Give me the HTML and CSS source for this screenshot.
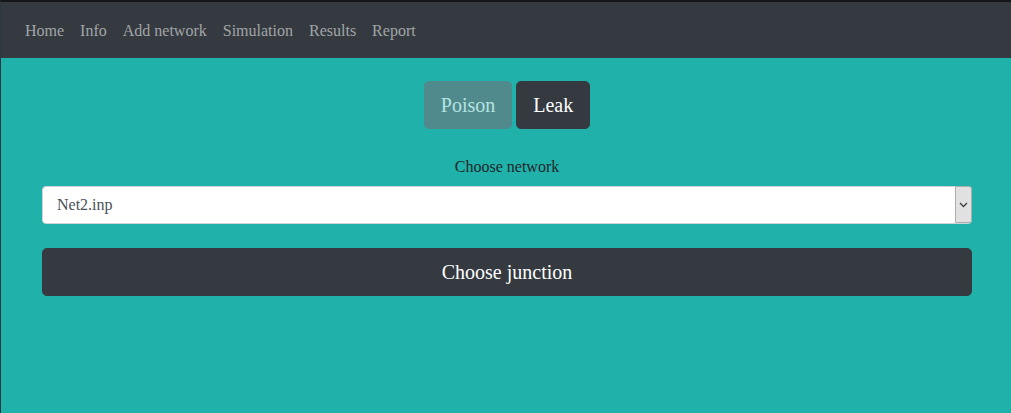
FILE: index.html
```html
<!DOCTYPE html>
<html lang="en">
<head>
<meta charset="utf-8">
<title>Simulation</title>
<link rel="stylesheet" href="styles.css">
</head>
<body>
<div class="page">
  <nav class="navbar">
    <a class="nav-link" href="#">Home</a>
    <a class="nav-link" href="#">Info</a>
    <a class="nav-link" href="#">Add network</a>
    <a class="nav-link" href="#">Simulation</a>
    <a class="nav-link" href="#">Results</a>
    <a class="nav-link" href="#">Report</a>
  </nav>
  <main class="main">
    <div class="toggle">
      <a class="btn btn-lg btn-secondary disabled" href="#">Poison</a>
      <a class="btn btn-lg btn-dark" href="#">Leak</a>
    </div>
    <label class="label" for="net">Choose network</label>
    <div class="select-wrap">
      <select id="net" class="select">
        <option>Net2.inp</option>
      </select>
      <span class="select-arrow">
        <svg width="9" height="6" viewBox="0 0 9 6"><path d="M1 1 L4.5 4.5 L8 1" fill="none" stroke="#3c3c3c" stroke-width="1.3"/></svg>
      </span>
    </div>
    <a class="btn btn-lg btn-dark btn-block" href="#">Choose junction</a>
  </main>
</div>
</body>
</html>
```
FILE: styles.css
```css
html, body {
  margin: 0;
  padding: 0;
  height: 100%;
}
body {
  font-family: "Liberation Serif", "Times New Roman", serif;
  font-size: 16px;
  line-height: 1.5;
  color: #212529;
  background: #20b2aa;
}
.page {
  min-height: 100%;
  box-sizing: border-box;
  border-top: 2px solid #141516;
  border-left: 1px solid #2b3845;
  background: #20b2aa;
}
.navbar {
  display: flex;
  align-items: center;
  height: 56px;
  padding: 1px 16px 0;
  box-sizing: border-box;
  background: #343a40;
}
.nav-link {
  color: rgba(255, 255, 255, 0.55);
  text-decoration: none;
  padding: 0 8px;
  font-size: 16px;
}
.main {
  display: flex;
  flex-direction: column;
  padding: 23px 39px 0 41px;
}
.toggle {
  display: flex;
  justify-content: center;
  gap: 4px;
}
.btn {
  display: block;
  box-sizing: border-box;
  text-align: center;
  text-decoration: none;
  border: 1px solid transparent;
  cursor: pointer;
}
.btn-lg {
  font-size: 20px;
  line-height: 1.5;
  padding: 8px 16px;
  border-radius: 4.8px;
}
.btn-secondary {
  background: #6c757d;
  border-color: #6c757d;
  color: #fff;
}
.btn-secondary.disabled {
  opacity: 0.65;
  cursor: default;
}
.btn-dark {
  background: #343a40;
  border-color: #343a40;
  color: #fff;
}
.label {
  align-self: center;
  margin-top: 26px;
  margin-bottom: 7px;
}
.select-wrap {
  position: relative;
  height: 38px;
}
.select {
  appearance: none;
  -webkit-appearance: none;
  width: 100%;
  height: 38px;
  box-sizing: border-box;
  font: inherit;
  font-family: "Liberation Serif", "Times New Roman", serif;
  font-size: 16px;
  color: #495057;
  background: #fff;
  border: 1px solid #ced4da;
  border-radius: 4px;
  padding: 0 12px 0 14px;
}
.select-arrow {
  position: absolute;
  top: 0;
  right: 0;
  width: 17px;
  height: 37px;
  box-sizing: border-box;
  background: #e1e1e1;
  border: 1px solid #adadad;
  border-radius: 0 3px 3px 0;
  display: flex;
  align-items: center;
  justify-content: center;
  pointer-events: none;
}
.btn-block {
  margin-top: 24px;
  width: 100%;
}
```
